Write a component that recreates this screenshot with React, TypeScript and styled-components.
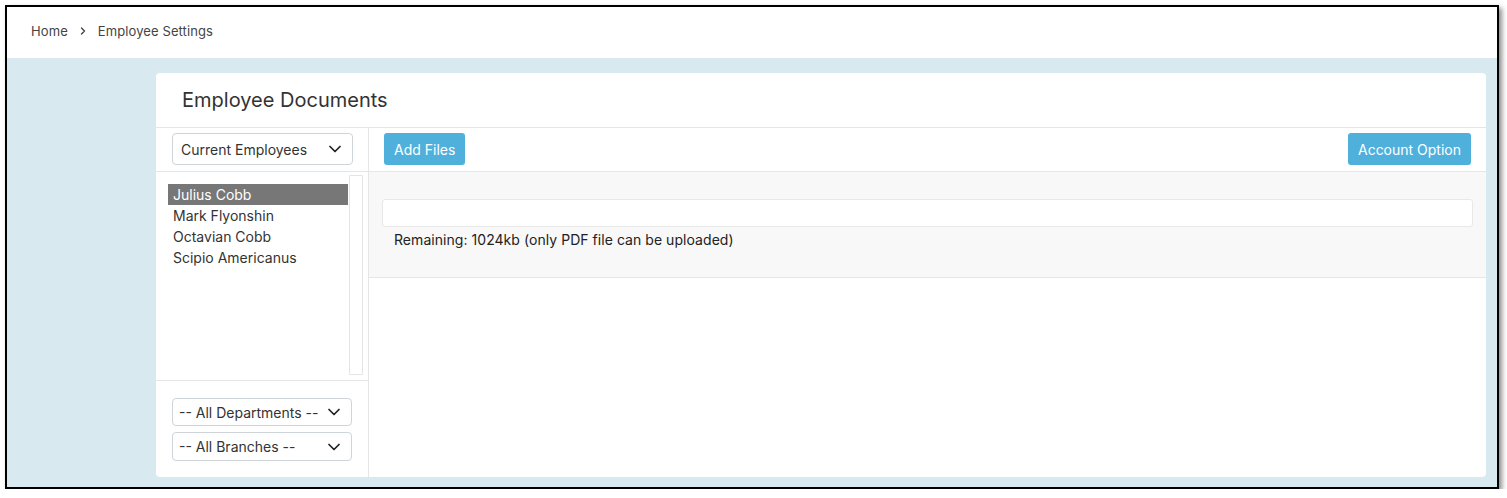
import React from "react";
import styled, { createGlobalStyle } from "styled-components";

const Global = createGlobalStyle`
  html, body { margin: 0; padding: 0; background: #ffffff; }
  body { font-family: Inter, "Noto Sans", Arial, sans-serif; color: #333; }
  * { box-sizing: border-box; }
`;

const Frame = styled.div`
  margin: 5px 0 0 5px;
  width: 1494px;
  height: 484px;
  border: 2px solid #000;
  box-shadow: 3px 3px 5px rgba(0, 0, 0, 0.45);
  display: flex;
  flex-direction: column;
  background: #d9e9f0;
  overflow: hidden;
`;

const TopBar = styled.div`
  height: 51px;
  background: #fff;
  display: flex;
  align-items: center;
  padding: 0 0 3px 24px;
  font-size: 13px;
  color: #444;
  gap: 11px;
`;

const Crumb = styled.span`
  color: #444;
  letter-spacing: 0.1px;
`;

const Main = styled.div`
  flex: 1;
  padding: 15px 11px 10px 149px;
  display: flex;
`;

const Card = styled.div`
  flex: 1;
  background: #fff;
  border-radius: 4px;
  display: flex;
  flex-direction: column;
`;

const CardHeader = styled.div`
  height: 55px;
  border-bottom: 1px solid #e6e6e6;
  display: flex;
  align-items: center;
  padding: 0 0 0 26px;
  font-size: 20px;
  color: #333;
`;

const CardBody = styled.div`
  flex: 1;
  display: flex;
`;

const LeftCol = styled.div`
  width: 213px;
  border-right: 1px solid #e6e6e6;
  display: flex;
  flex-direction: column;
`;

const SelectRow = styled.div`
  height: 44px;
  border-bottom: 1px solid #e6e6e6;
  padding: 5px 15px 0 16px;
`;

const SelectBox = styled.div<{ $h?: number; $pl?: number }>`
  height: ${(p) => p.$h ?? 32}px;
  border: 1px solid #cfd4d8;
  border-radius: 4px;
  display: flex;
  align-items: center;
  justify-content: space-between;
  padding: 0 11px 0 ${(p) => p.$pl ?? 8}px;
  font-size: 14px;
  color: #333;
  background: #fff;
`;

const ListArea = styled.div`
  height: 209px;
  border-bottom: 1px solid #e6e6e6;
  padding: 3px 5px 0 12px;
  display: flex;
`;

const ListItems = styled.div`
  flex: 1;
  padding-top: 9px;
`;

const ListItem = styled.div<{ $selected?: boolean }>`
  height: 21px;
  line-height: 21px;
  padding-left: 5px;
  font-size: 14px;
  color: ${(p) => (p.$selected ? "#fff" : "#333")};
  background: ${(p) => (p.$selected ? "#777777" : "transparent")};
  margin-right: 1px;
`;

const ScrollTrack = styled.div`
  width: 14px;
  height: 200px;
  border: 1px solid #e4e4e4;
  border-radius: 1px;
`;

const Filters = styled.div`
  flex: 1;
  padding: 17px 16px 0 16px;
  display: flex;
  flex-direction: column;
  gap: 6px;
`;

const RightCol = styled.div`
  flex: 1;
  display: flex;
  flex-direction: column;
`;

const Toolbar = styled.div`
  height: 44px;
  border-bottom: 1px solid #e6e6e6;
  display: flex;
  justify-content: space-between;
  align-items: flex-start;
  padding: 5px 15px 0 15px;
`;

const Button = styled.button`
  height: 32px;
  border: none;
  border-radius: 3px;
  background: #4fb0dc;
  color: #fff;
  font-family: inherit;
  font-size: 14px;
  padding: 0 10px;
  cursor: pointer;
`;

const UploadPanel = styled.div`
  height: 106px;
  background: #f8f8f8;
  border-bottom: 1px solid #e6e6e6;
  padding: 27px 13px 0 13px;
`;

const FileInput = styled.div`
  height: 28px;
  background: #fff;
  border: 1px solid #e8e8e8;
  border-radius: 3px;
`;

const Note = styled.div`
  padding: 4px 0 0 12px;
  font-size: 14px;
  color: #222;
  letter-spacing: 0.05px;
`;

const Chevron = () => (
  <svg width="12" height="12" viewBox="0 0 12 12" fill="none">
    <path d="M1 3.5l5 5 5-5" stroke="#222" strokeWidth="1.7" strokeLinecap="round" strokeLinejoin="round" />
  </svg>
);

const Caret = () => (
  <svg width="8" height="10" viewBox="0 0 8 10" fill="none">
    <path d="M2.5 2l3 3-3 3" stroke="#444" strokeWidth="1.4" strokeLinecap="round" strokeLinejoin="round" />
  </svg>
);

const employees = ["Julius Cobb", "Mark Flyonshin", "Octavian Cobb", "Scipio Americanus"];

export default function App() {
  return (
    <>
      <Global />
      <Frame>
        <TopBar>
          <Crumb>Home</Crumb>
          <Caret />
          <Crumb>Employee Settings</Crumb>
        </TopBar>
        <Main>
          <Card>
            <CardHeader>Employee Documents</CardHeader>
            <CardBody>
              <LeftCol>
                <SelectRow>
                  <SelectBox>
                    <span>Current Employees</span>
                    <Chevron />
                  </SelectBox>
                </SelectRow>
                <ListArea>
                  <ListItems>
                    {employees.map((e, i) => (
                      <ListItem key={e} $selected={i === 0}>
                        {e}
                      </ListItem>
                    ))}
                  </ListItems>
                  <ScrollTrack />
                </ListArea>
                <Filters>
                  <SelectBox $h={28} $pl={6}>
                    <span>-- All Departments --</span>
                    <Chevron />
                  </SelectBox>
                  <SelectBox $h={29} $pl={6}>
                    <span>-- All Branches --</span>
                    <Chevron />
                  </SelectBox>
                </Filters>
              </LeftCol>
              <RightCol>
                <Toolbar>
                  <Button>Add Files</Button>
                  <Button>Account Option</Button>
                </Toolbar>
                <UploadPanel>
                  <FileInput />
                  <Note>Remaining: 1024kb (only PDF file can be uploaded)</Note>
                </UploadPanel>
              </RightCol>
            </CardBody>
          </Card>
        </Main>
      </Frame>
    </>
  );
}
